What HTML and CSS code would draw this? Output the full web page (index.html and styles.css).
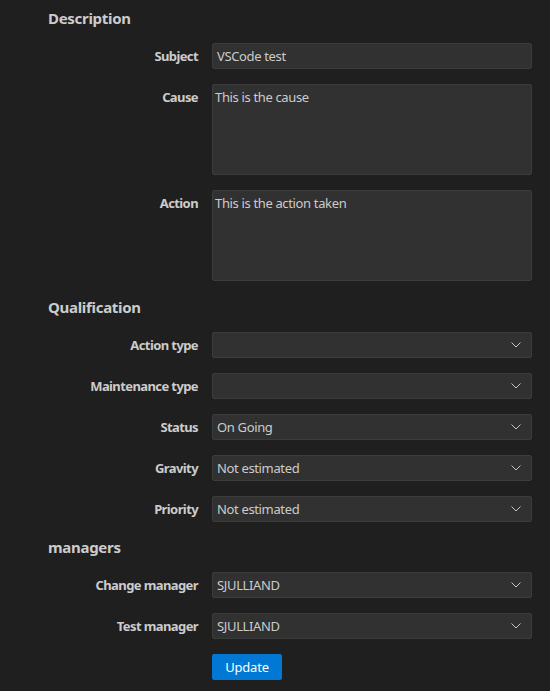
FILE: index.html
```html
<!DOCTYPE html>
<html>
<head>
<meta charset="utf-8">
<link rel="stylesheet" href="styles.css">
</head>
<body>
<div class="page">
  <h2 class="section">Description</h2>
  <div class="form">
    <label class="lbl">Subject</label>
    <div class="field input">VSCode test</div>
    <label class="lbl">Cause</label>
    <div class="field area">This is the cause</div>
    <label class="lbl">Action</label>
    <div class="field area">This is the action taken</div>
  </div>

  <h2 class="section sec-gap">Qualification</h2>
  <div class="form">
    <label class="lbl">Action type</label>
    <div class="field select"><span></span><svg class="chev" width="10" height="6" viewBox="0 0 10 6"><path d="M0.5 0.5 L5 5 L9.5 0.5" fill="none" stroke="#c5c5c5" stroke-width="1"/></svg></div>
    <label class="lbl">Maintenance type</label>
    <div class="field select"><span></span><svg class="chev" width="10" height="6" viewBox="0 0 10 6"><path d="M0.5 0.5 L5 5 L9.5 0.5" fill="none" stroke="#c5c5c5" stroke-width="1"/></svg></div>
    <label class="lbl">Status</label>
    <div class="field select"><span>On Going</span><svg class="chev" width="10" height="6" viewBox="0 0 10 6"><path d="M0.5 0.5 L5 5 L9.5 0.5" fill="none" stroke="#c5c5c5" stroke-width="1"/></svg></div>
    <label class="lbl">Gravity</label>
    <div class="field select"><span>Not estimated</span><svg class="chev" width="10" height="6" viewBox="0 0 10 6"><path d="M0.5 0.5 L5 5 L9.5 0.5" fill="none" stroke="#c5c5c5" stroke-width="1"/></svg></div>
    <label class="lbl">Priority</label>
    <div class="field select"><span>Not estimated</span><svg class="chev" width="10" height="6" viewBox="0 0 10 6"><path d="M0.5 0.5 L5 5 L9.5 0.5" fill="none" stroke="#c5c5c5" stroke-width="1"/></svg></div>
  </div>

  <h2 class="section sec-gap-sm">managers</h2>
  <div class="form">
    <label class="lbl">Change manager</label>
    <div class="field select"><span>SJULLIAND</span><svg class="chev" width="10" height="6" viewBox="0 0 10 6"><path d="M0.5 0.5 L5 5 L9.5 0.5" fill="none" stroke="#c5c5c5" stroke-width="1"/></svg></div>
    <label class="lbl">Test manager</label>
    <div class="field select"><span>SJULLIAND</span><svg class="chev" width="10" height="6" viewBox="0 0 10 6"><path d="M0.5 0.5 L5 5 L9.5 0.5" fill="none" stroke="#c5c5c5" stroke-width="1"/></svg></div>
    <span></span>
    <div><button class="btn">Update</button></div>
  </div>
</div>
</body>
</html>
```
FILE: styles.css
```css
html, body {
  margin: 0;
  padding: 0;
  background: #1f1f1f;
}
body {
  font-family: "Segoe UI", "Noto Sans", "Open Sans", sans-serif;
  font-size: 13px;
  letter-spacing: -0.35px;
  color: #cccccc;
  height: 691px;
  overflow: hidden;
}
.page {
  padding: 8px 18px 0 48px;
}
.section {
  margin: 0;
  font-size: 15px;
  font-weight: 700;
  line-height: 20px;
  letter-spacing: -0.3px;
  color: #cccccc;
}
.sec-gap {
  margin-top: 16px;
}
.sec-gap-sm {
  margin-top: 15px;
}
.form {
  display: grid;
  grid-template-columns: 150px 320px;
  column-gap: 14px;
  row-gap: 15px;
  margin-top: 15px;
}
.lbl {
  font-weight: 700;
  text-align: right;
  line-height: 26px;
  letter-spacing: -0.6px;
  white-space: nowrap;
}
.field {
  box-sizing: border-box;
  background: #313131;
  border: 1px solid #3c3c3c;
  border-radius: 2px;
  color: #cccccc;
}
.input {
  height: 26px;
  line-height: 24px;
  padding: 0 4px;
}
.area {
  height: 91px;
  padding: 2px 2px;
  line-height: 20px;
}
.select {
  height: 26px;
  padding: 0 10px 0 4px;
  display: flex;
  align-items: center;
  justify-content: space-between;
}
.chev {
  display: block;
}
.btn {
  height: 26px;
  width: 70px;
  background: #0078d4;
  color: #ffffff;
  border: 1px solid #0078d4;
  border-radius: 2px;
  font-family: inherit;
  font-size: 13px;
  letter-spacing: -0.2px;
  padding: 0;
}
```
